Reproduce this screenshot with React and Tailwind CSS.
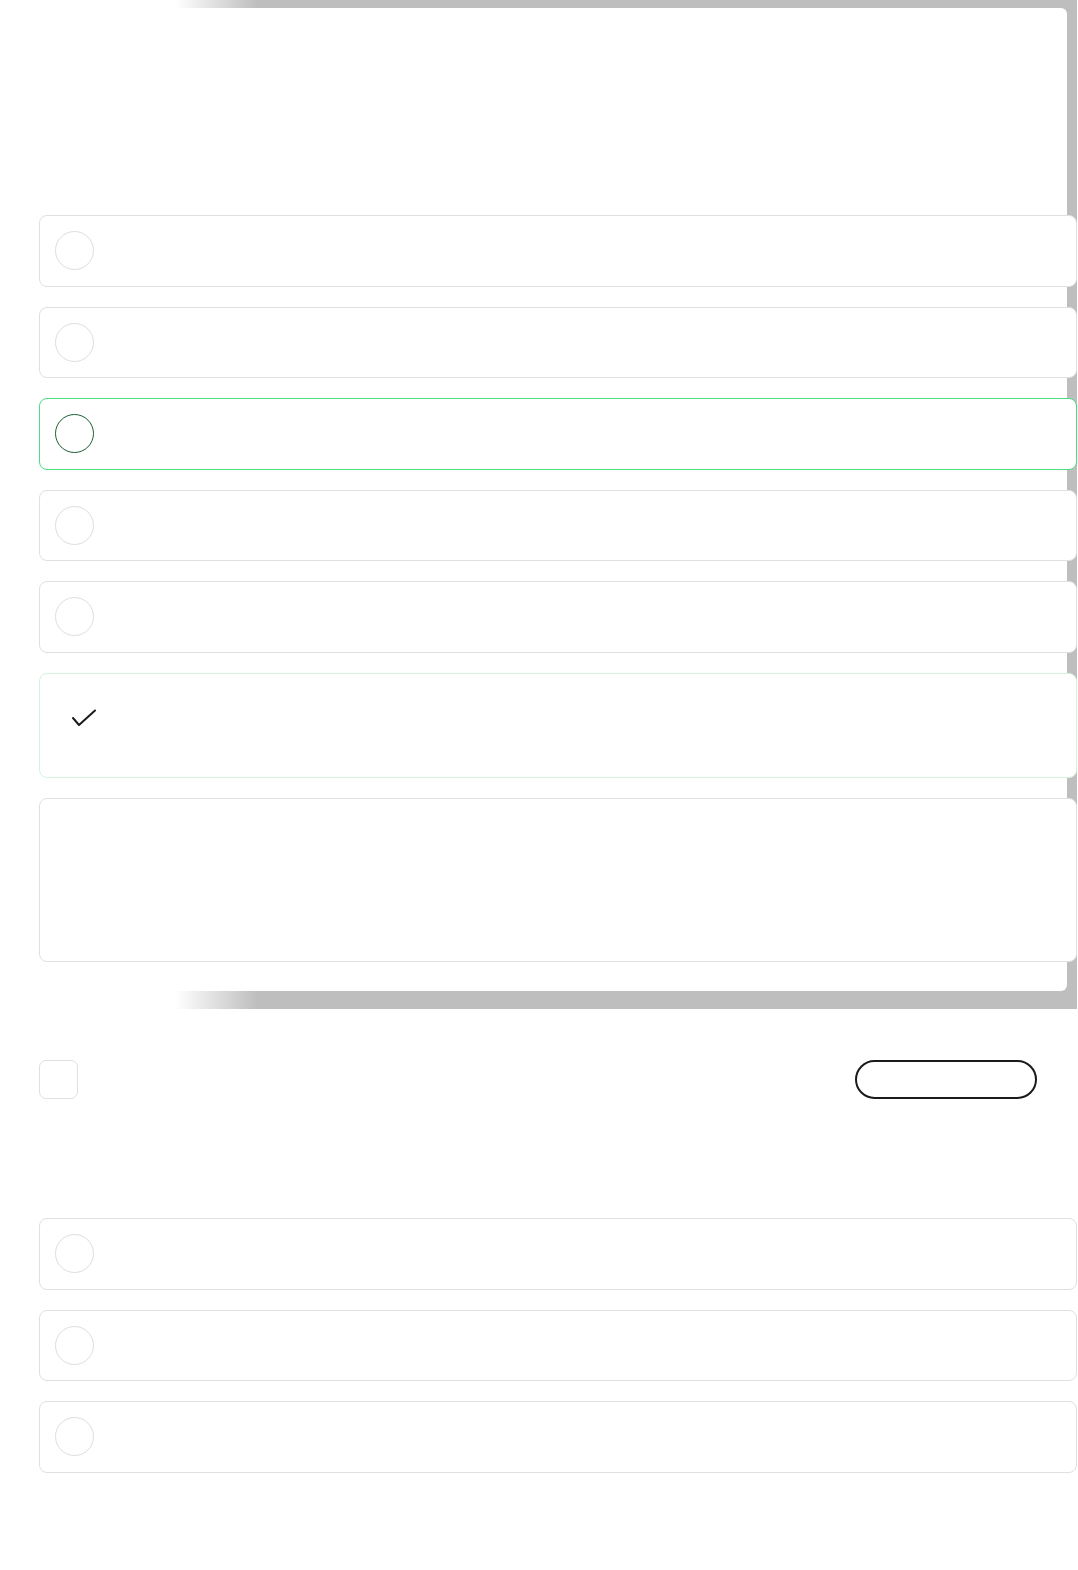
import { useState } from 'react'

const topOptions = [
  { id: 'a', state: 'idle' },
  { id: 'b', state: 'idle' },
  { id: 'c', state: 'selected' },
  { id: 'd', state: 'idle' },
  { id: 'e', state: 'idle' },
]

const bottomOptions = [{ id: 'f' }, { id: 'g' }, { id: 'h' }]

function OptionRow({ selected, onSelect }) {
  return (
    <button
      type="button"
      onClick={onSelect}
      className={
        'flex h-[71.5px] w-[1038px] shrink-0 items-center rounded-lg border bg-white px-[15px] text-left ' +
        (selected ? 'border-[#4ade80]' : 'border-[#e0e0e0]')
      }
    >
      <span
        className={
          'block h-[39px] w-[39px] rounded-full ' +
          (selected ? 'border-[1.5px] border-[#1b5e32]' : 'border border-[#dedede]')
        }
      />
    </button>
  )
}

function CheckRow() {
  return (
    <div className="flex h-[105px] w-[1038px] shrink-0 items-start rounded-lg border border-[#d3f4dc] bg-white pl-[31px] pt-[34px]">
      <svg width="26" height="20" viewBox="0 0 26 20" fill="none">
        <polyline points="2,10 8,17 24,2.5" stroke="#1a1a1a" strokeWidth="2" strokeLinecap="round" strokeLinejoin="round" />
      </svg>
    </div>
  )
}

export default function App() {
  const [picked, setPicked] = useState('c')
  const [agreed, setAgreed] = useState(false)

  return (
    <div className="min-h-[1570px] w-[1078px] bg-white font-['Inter',sans-serif]">
      {/* grey frame with the fading left edge */}
      <div className="w-[1077px] bg-[linear-gradient(to_right,#ffffff_175px,#bebebe_258px)] pb-[18px] pr-[10px] pt-[8px]">
        <div className="flex h-[983px] flex-col gap-5 rounded-r-[6px] bg-white pl-[39px] pt-[207px]">
          {topOptions.map((o) => (
            <OptionRow key={o.id} selected={picked === o.id} onSelect={() => setPicked(o.id)} />
          ))}
          <CheckRow />
          <div className="h-[164px] w-[1038px] shrink-0 rounded-lg border border-[#e0e0e0] bg-white" />
        </div>
      </div>

      <div className="mt-[51px] flex items-center justify-between pl-[39px] pr-[41px]">
        <button
          type="button"
          onClick={() => setAgreed(!agreed)}
          className="h-[39px] w-[39px] rounded-[7px] border border-[#e0e0e0] bg-white"
        />
        <button type="button" className="h-[39px] w-[182px] rounded-full border-2 border-[#1a1a1a] bg-white" />
      </div>

      <div className="mt-[119px] flex flex-col gap-5 pl-[39px]">
        {bottomOptions.map((o) => (
          <OptionRow key={o.id} selected={picked === o.id} onSelect={() => setPicked(o.id)} />
        ))}
      </div>
    </div>
  )
}
